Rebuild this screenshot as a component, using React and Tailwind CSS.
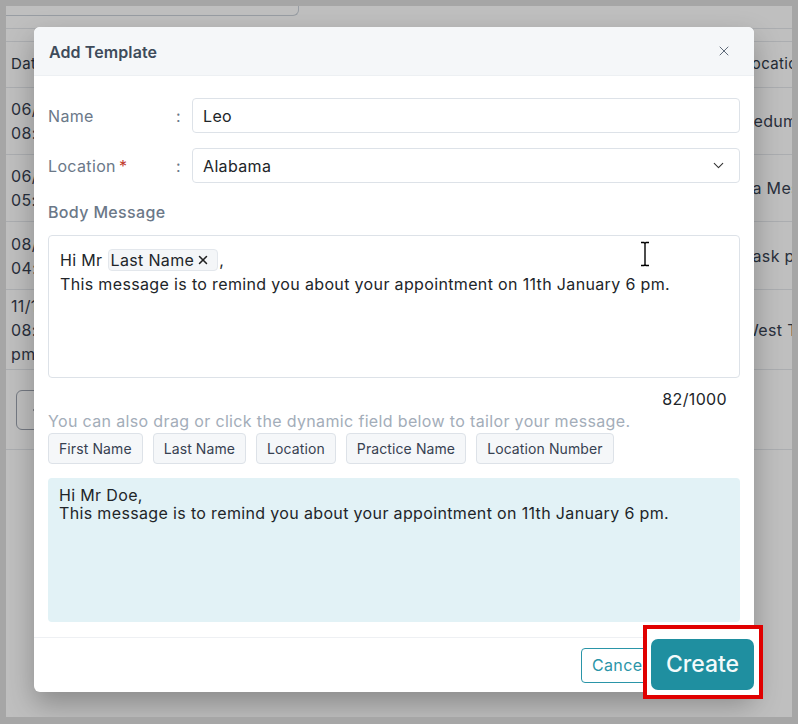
import { ChevronDown, ChevronLeft, X } from 'lucide-react';

const ROWS = [
  { lines: ['06/12/2023', '08:15 am'], location: 'Pedum Clinic', h: 'h-[67px]' },
  { lines: ['06/14/2023', '05:40 pm'], location: 'La Mesa Dental', h: 'h-[67px]' },
  { lines: ['08/02/2023', '04:10 pm'], location: 'Task park Office', h: 'h-[68px]' },
  { lines: ['11/18/2023', '08:45', 'pm'], location: 'West Town', h: 'h-[80px]' },
];

const FIELDS = ['First Name', 'Last Name', 'Location', 'Practice Name', 'Location Number'];

/** Table that sits behind the modal */
function TemplateTable() {
  return (
    <div className="text-[16px] text-[#374151]">
      <div className="h-[10px] w-[293px] rounded-br-[6px] border-r border-b border-[#cbd2da]" />
      <div className="mt-[12px] h-[14px] border-t border-b border-[#e5e7eb]" />
      <div className="grid h-[46px] grid-cols-[732px_1fr] items-center border-b border-[#e5e7eb] pl-[5px] text-[15px] text-[#2f3a48]">
        <span>Date</span>
        <span>Location</span>
      </div>
      {ROWS.map((r) => (
        <div
          key={r.lines[0]}
          className={`grid ${r.h} grid-cols-[732px_1fr] items-center border-b border-[#e5e7eb] pl-[5px]`}
        >
          <div className="leading-[24px]">
            {r.lines.map((l) => (
              <div key={l}>{l}</div>
            ))}
          </div>
          <span className="whitespace-nowrap">{r.location}</span>
        </div>
      ))}
      <div className="flex h-[80px] items-center border-b border-[#e5e7eb] pl-[10px]">
        <button className="flex h-[40px] w-[40px] items-center justify-center rounded-[6px] border border-[#9ca3af] text-[#6b7280]">
          <ChevronLeft size={18} strokeWidth={1.5} />
        </button>
      </div>
    </div>
  );
}

function FieldRow({ label, required, children }) {
  return (
    <div className="flex h-[35px] items-center">
      <span className="w-[128px] text-[16px] text-[#6b7888]">
        {label}
        {required && <span className="ml-[3px] text-[#c0392b]">*</span>}
      </span>
      <span className="w-[16px] text-[16px] text-[#6b7888]">:</span>
      {children}
    </div>
  );
}

function IBeam() {
  return (
    <svg width="12" height="26" viewBox="0 0 12 26" className="absolute left-[590px] top-[5px]">
      <path d="M2 1.5h3l1 1 1-1h3M6 2.5v21M2 24.5h3l1-1 1 1h3" fill="none" stroke="#fff" strokeWidth="3" />
      <path d="M2 1.5h3l1 1 1-1h3M6 2.5v21M2 24.5h3l1-1 1 1h3" fill="none" stroke="#000" strokeWidth="1.4" />
    </svg>
  );
}

/** Add Template modal */
function AddTemplateDialog() {
  return (
    <div className="absolute left-[28px] top-[21px] flex h-[665px] w-[720px] flex-col overflow-hidden rounded-[6px] bg-white shadow-[0_12px_28px_rgba(0,0,0,0.28)]">
      <div className="flex h-[49px] shrink-0 items-center justify-between border-b border-[#edf0f3] bg-[#f5f7f9] pl-[15px] pr-[22px]">
        <h2 className="pt-[1px] text-[16px] font-semibold tracking-[0.1px] text-[#3e4b5b]">Add Template</h2>
        <X size={16} strokeWidth={1.5} className="text-[#5f6b7a]" />
      </div>

      <div className="flex flex-1 flex-col px-[14px] pt-[22px]">
        <FieldRow label="Name">
          <div className="flex h-full flex-1 items-center rounded-[4px] border border-[#dde2e8] px-[10px] text-[16px] text-[#212529]">
            Leo
          </div>
        </FieldRow>
        <div className="mt-[15px]">
          <FieldRow label="Location" required>
            <div className="flex h-full flex-1 items-center justify-between rounded-[4px] border border-[#dde2e8] pl-[10px] pr-[12px] text-[16px] text-[#212529]">
              Alabama
              <ChevronDown size={17} strokeWidth={1.5} className="text-[#333]" />
            </div>
          </FieldRow>
        </div>

        <div className="mt-[17px] text-[16px] font-medium leading-[24px] text-[#6b7888]">Body Message</div>

        <div className="relative mt-[11px] h-[143px] rounded-[4px] border border-[#dde2e8] px-[11px] pt-[12px] text-[16px] leading-[24px] text-[#212529]">
          <div className="flex items-center">
            Hi Mr
            <span className="ml-[5px] inline-flex h-[22px] items-center rounded-[4px] border border-[#e3e7ec] bg-[#f4f6f8] pl-[2px] pr-[7px]">
              Last Name
              <X size={14} strokeWidth={2.6} className="ml-[2px] text-[#222]" />
            </span>
            <span className="ml-[1px]">,</span>
          </div>
          <div>This message is to remind you about your appointment on 11th January 6 pm.</div>
          <IBeam />
        </div>

        <div className="mt-[11px] pr-[13px] text-right text-[16px] leading-[20px] text-[#212529]">82/1000</div>
        <div className="mt-[2px] text-[16px] leading-[20px] text-[#a3adb9]">
          You can also drag or click the dynamic field below to tailor your message.
        </div>

        <div className="mt-[2px] flex gap-[10px] tracking-[0.1px]">
          {FIELDS.map((f) => (
            <span
              key={f}
              className="flex h-[31px] items-center rounded-[4px] border border-[#dde2e8] bg-[#f5f7f9] px-[10px] text-[14px] text-[#374151]"
            >
              {f}
            </span>
          ))}
        </div>

        <div className="mt-[14px] h-[144px] rounded-[4px] bg-[#e2f2f6] px-[11px] pt-[8px] text-[16px] leading-[18px] text-[#212529]">
          <div>Hi Mr Doe,</div>
          <div>This message is to remind you about your appointment on 11th January 6 pm.</div>
        </div>
      </div>

      <div className="flex h-[55px] shrink-0 items-center justify-end gap-[8px] border-t border-[#eef0f3] px-[14px]">
        <button className="h-[35px] rounded-[4px] border border-[#2a95a8] px-[10px] text-[16px] text-[#2a95a8]">
          Cancel
        </button>
        <button className="h-[35px] rounded-[4px] bg-[#1f8fa0] px-[11px] text-[16px] text-white">Create</button>
      </div>
    </div>
  );
}

export default function App() {
  return (
    <div className="h-[724px] w-[798px] bg-[#a6a6a6] p-[6px] font-['Inter',sans-serif] tracking-[0.35px]">
      <div className="relative h-[711px] w-[786px] overflow-hidden bg-white">
        <TemplateTable />
        <div className="absolute inset-0 bg-black/25" />
        <AddTemplateDialog />

        {/* highlight around the primary action */}
        <div className="absolute left-[637px] top-[619px] h-[74px] w-[120px] border-[4px] border-[#e00000] bg-white pl-[4px] pt-[10px]">
          <button className="flex h-[51px] w-[103px] items-center justify-center rounded-[7px] bg-[#1f8fa0] text-[23px] font-medium tracking-normal text-[#f3fafb]">
            Create
          </button>
        </div>
      </div>
    </div>
  );
}
